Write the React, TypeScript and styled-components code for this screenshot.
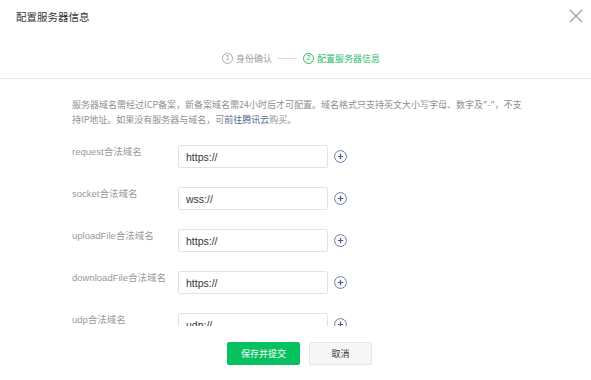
import React from 'react'
import styled, { createGlobalStyle } from 'styled-components'

const FONT = `'Noto Sans CJK SC', 'Noto Sans', Arial, sans-serif`
const MIXED = `'Liberation Sans', 'Noto Sans CJK SC', Arial, sans-serif`

const GlobalStyle = createGlobalStyle`
  html, body {
    margin: 0;
    padding: 0;
    background: #fff;
  }
  * {
    box-sizing: border-box;
  }
`

const fields = [
  { label: 'request合法域名', value: 'https://' },
  { label: 'socket合法域名', value: 'wss://' },
  { label: 'uploadFile合法域名', value: 'https://' },
  { label: 'downloadFile合法域名', value: 'https://' },
  { label: 'udp合法域名', value: 'udp://' },
]

export default function App() {
  return (
    <>
      <GlobalStyle />
      <Dialog>
        <Header>
          <Title>配置服务器信息</Title>
          <CloseBtn aria-label="关闭">
            <svg width="14" height="14" viewBox="0 0 14 14">
              <path d="M1 1L13 13M13 1L1 13" stroke="#9a9a9a" strokeWidth="1.1" fill="none" />
            </svg>
          </CloseBtn>
        </Header>

        <Steps>
          <Step>
            <StepNum>1</StepNum>
            身份确认
          </Step>
          <StepLine />
          <Step $active>
            <StepNum $active>2</StepNum>
            配置服务器信息
          </Step>
        </Steps>

        <Body>
          <Desc>
            服务器域名需经过ICP备案，新备案域名需24小时后才可配置。域名格式只支持英文大小写字母、数字及"-"，不支
            <br />
            持IP地址。如果没有服务器与域名，可<DescLink>前往腾讯云</DescLink>购买。
          </Desc>

          {fields.map((f) => (
            <FieldRow key={f.label}>
              <FieldLabel>{f.label}</FieldLabel>
              <FieldInput defaultValue={f.value} />
              <AddBtn aria-label="添加">
                <svg width="13" height="13" viewBox="0 0 13 13">
                  <circle cx="6.5" cy="6.5" r="5.9" stroke="#6b7aa8" strokeWidth="1" fill="none" />
                  <path d="M6.5 3.8V9.2M3.8 6.5H9.2" stroke="#4d5b8a" strokeWidth="1.2" />
                </svg>
              </AddBtn>
            </FieldRow>
          ))}
        </Body>

        <Footer>
          <PrimaryBtn>保存并提交</PrimaryBtn>
          <DefaultBtn>取消</DefaultBtn>
        </Footer>
      </Dialog>
    </>
  )
}

const Dialog = styled.div`
  width: 591px;
  height: 380px;
  display: flex;
  flex-direction: column;
  background: #fff;
  font-family: ${FONT};
  overflow: hidden;
`

const Header = styled.div`
  height: 32px;
  display: flex;
  align-items: center;
  justify-content: space-between;
  padding: 0 8px 0 16px;
`

const Title = styled.h3`
  margin: 0;
  font-size: 10.5px;
  font-weight: 400;
  color: #353535;
`

const CloseBtn = styled.button`
  border: none;
  background: none;
  padding: 0;
  width: 14px;
  height: 14px;
  display: flex;
  cursor: pointer;
`

const Steps = styled.div`
  height: 47px;
  display: flex;
  align-items: center;
  justify-content: center;
  gap: 6px;
  padding-top: 6px;
  padding-left: 11px;
  border-bottom: 1px solid #ebebeb;
`

const Step = styled.div<{ $active?: boolean }>`
  display: flex;
  align-items: center;
  gap: 3px;
  font-size: 9px;
  color: ${(p) => (p.$active ? '#2bbd6a' : '#9a9a9a')};
`

const StepNum = styled.span<{ $active?: boolean }>`
  width: 11px;
  height: 11px;
  border-radius: 50%;
  border: 1px solid ${(p) => (p.$active ? '#2bbd6a' : '#aaa')};
  display: flex;
  align-items: center;
  justify-content: center;
  font-size: 7.5px;
  line-height: 1;
  font-family: 'Liberation Sans', Arial, sans-serif;
`

const StepLine = styled.span`
  width: 19px;
  height: 1px;
  background: #dcdcdc;
`

const Body = styled.div`
  height: 247px;
  overflow: hidden;
  padding: 18px 0 0 72px;
`

const Desc = styled.p`
  margin: 0 0 18px;
  width: 460px;
  font-size: 9px;
  line-height: 15px;
  color: #8f8f8f;
  white-space: nowrap;
`

const DescLink = styled.span`
  color: #576b95;
  cursor: pointer;
`

const FieldRow = styled.div`
  display: flex;
  align-items: flex-start;
  margin-bottom: 19px;
`

const FieldLabel = styled.label`
  width: 106px;
  flex-shrink: 0;
  font-family: ${MIXED};
  font-size: 9.5px;
  line-height: 14px;
  color: #999;
`

const FieldInput = styled.input`
  width: 150px;
  height: 23px;
  border: 1px solid #e3e3e3;
  border-radius: 2px;
  padding: 0 7px;
  font-family: ${MIXED};
  font-size: 10.5px;
  color: #353535;
  outline: none;
`

const AddBtn = styled.button`
  margin: 5px 0 0 6px;
  border: none;
  background: none;
  padding: 0;
  width: 13px;
  height: 13px;
  display: flex;
  cursor: pointer;
`

const Footer = styled.div`
  flex: 1;
  display: flex;
  justify-content: center;
  align-items: flex-start;
  gap: 9px;
  padding: 16px 0 0 8px;
`

const PrimaryBtn = styled.button`
  width: 73px;
  height: 23px;
  border: none;
  border-radius: 2px;
  background: #07c160;
  color: #fff;
  font-family: ${FONT};
  font-size: 9px;
  cursor: pointer;
`

const DefaultBtn = styled.button`
  width: 63px;
  height: 23px;
  border: 1px solid #e6e6e6;
  border-radius: 2px;
  background: #f7f7f7;
  color: #353535;
  font-family: ${FONT};
  font-size: 9px;
  cursor: pointer;
`
